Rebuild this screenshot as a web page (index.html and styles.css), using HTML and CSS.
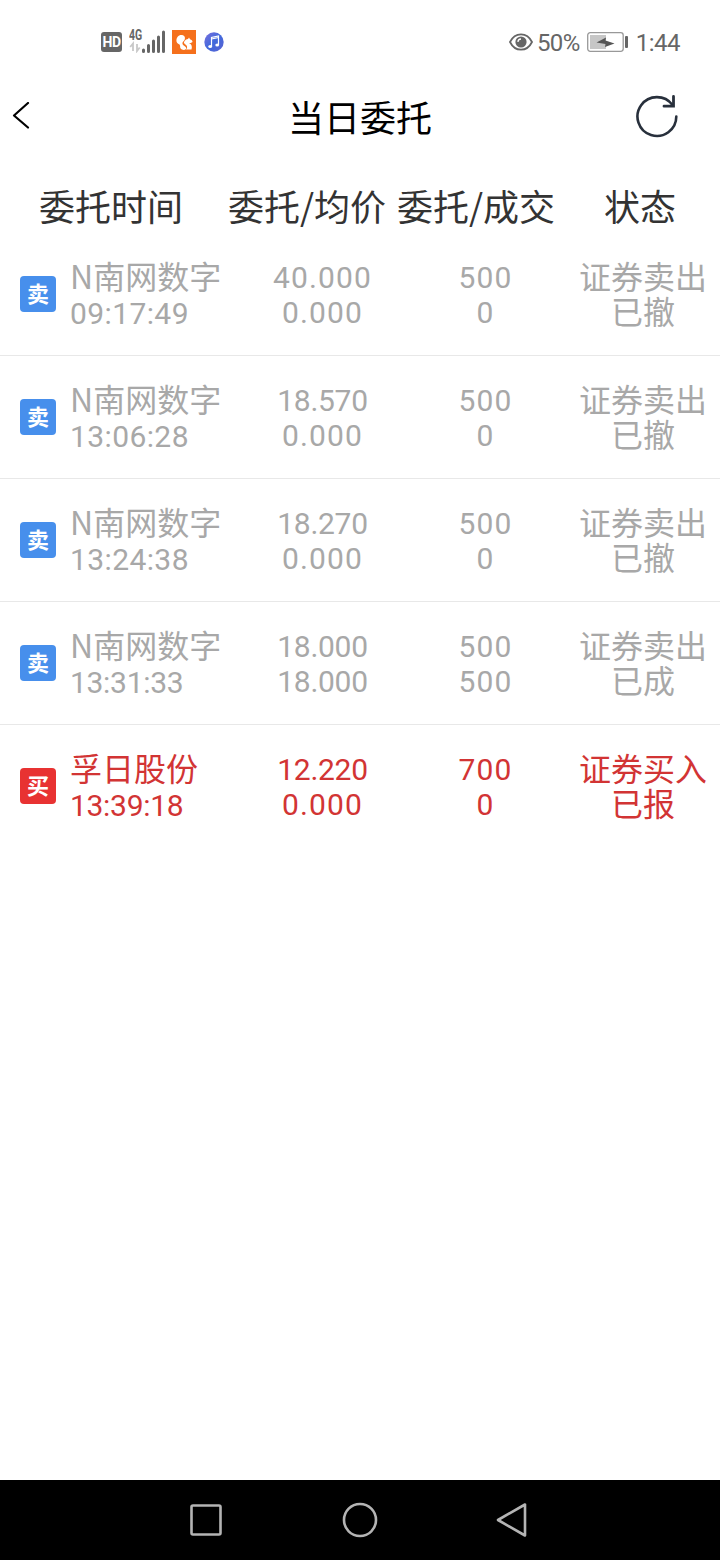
FILE: index.html
```html
<!DOCTYPE html>
<html lang="zh-CN">
<head>
    <meta charset="UTF-8">
    <meta name="viewport" content="width=device-width, initial-scale=1.0">
    <title>当日委托</title>
    <link rel="stylesheet" href="styles.css">
</head>
<body>
    <div class="status-bar">
        <div class="status-left">
            <span class="hd">HD</span>
            <div class="signal">
                <span class="net">4G</span>
                <svg width="37" height="24" viewBox="0 0 37 24">
                    <path d="M4 22v-7.500L1.200 18M8 15v7l2.700-3.500" stroke="#c8c8c8" stroke-width="1.800" fill="none"/>
                    <path d="M14.500 22.500v-1.500M19.500 22.500v-6M24.500 22.500V12M29.500 22.500V8M34.500 22.500V3" stroke="#666" stroke-width="3" stroke-linecap="round"/>
                </svg>
            </div>
            <svg class="squirrel" width="24" height="24" viewBox="0 0 24 24">
                <rect width="24" height="24" fill="#f5701c"/>
                <path d="M4.500 11.500C4 7 7 4.500 10 5c3 .5 3.500 3 2.500 5-.8 1.500-2.500 2-2 4 .5 1.700 2.500 2 3.500 3.500 1 2-2 3-4 2-3-1.500-1-3-2.500-5-1-1-2.500-1-3-3z" fill="#fff"/>
                <path d="M12 12c1-2 2.500-3 4-3l1-1.500 1 1.800c1.500.3 2.500 1.500 2.500 2.700-1 1-2.500 1-3.500 1 2.500 1 3.500 3.500 2.500 6.500h-5.500c2-2 1-4-.5-5-1-.7-1.800-1.500-1.500-2.500z" fill="#fff"/>
            </svg>
            <svg class="music" width="20" height="20" viewBox="0 0 20 20">
                <defs>
                    <linearGradient id="blue" x1="0" y1="0" x2="1" y2="1">
                        <stop offset="0" stop-color="#7a6fdc"/>
                        <stop offset=".5" stop-color="#4169dc"/>
                        <stop offset="1" stop-color="#5b62d2"/>
                    </linearGradient>
                </defs>
                <circle cx="10" cy="10" r="9.700" fill="url(#blue)"/>
                <path d="M7.500 14.500V5.500l7-1.500V13M7.500 7l7-1.500" stroke="#fff" stroke-width="1.200" fill="none"/>
                <ellipse cx="6.200" cy="14.600" rx="1.900" ry="1.500" fill="#fff"/>
                <ellipse cx="13.200" cy="13" rx="1.900" ry="1.500" fill="#fff"/>
            </svg>
        </div>
        <div class="status-right">
            <svg class="eye" width="24" height="18" viewBox="0 0 24 18">
                <path d="M1 9C6-1.200 18-1.200 23 9 18 19.200 6 19.200 1 9z" fill="none" stroke="#666" stroke-width="1.800"/>
                <circle cx="12" cy="9" r="5.600" fill="#666"/>
                <path d="M9 9c0-2 1.500-3 3-3" stroke="#fff" stroke-width="1.300" fill="none"/>
            </svg>
            <span class="percent">50%</span>
            <svg class="battery" width="42" height="20" viewBox="0 0 42 20">
                <rect x=".7" y=".7" width="35.500" height="18.600" rx="2.500" fill="#fff" stroke="#999" stroke-width="1.300"/>
                <rect x="3" y="3" width="16" height="14" fill="#c6c6c6"/>
                <path d="M9.500 10.500L19 5.500l-.5 3L27.500 11.500l-9.500 3.500.5-3z" fill="#555"/>
                <rect x="38" y="4" width="3" height="12" rx="1" fill="#666"/>
            </svg>
            <span class="clock">1:44</span>
        </div>
    </div>

    <header>
        <svg class="back" width="18" height="28" viewBox="0 0 18 28">
            <path d="M16 1L2 13.500l14 12" fill="none" stroke="#000" stroke-width="2.200" stroke-linecap="round" stroke-linejoin="round"/>
        </svg>
        <h1>当日委托</h1>
        <svg class="refresh" width="44" height="44" viewBox="0 0 44 44">
            <path d="M41.300 22.500A19.400 19.400 0 1 1 37.500 11" fill="none" stroke="#28303c" stroke-width="2.600" stroke-linecap="round"/>
            <path d="M38.500 2.500v9.700h-9.500" fill="none" stroke="#28303c" stroke-width="2.800" stroke-linecap="round"/>
        </svg>
    </header>

    <main>
        <div class="table-head">
            <span class="first">委托时间</span>
            <span>委托/均价</span>
            <span>委托/成交</span>
            <span>状态</span>
        </div>

        <div class="order sell">
            <span class="badge">卖</span>
            <div class="name"><span class="mark">N</span>南网数字<br><span class="time">09:17:49</span></div>
            <div class="num">40.000<br>0.000</div>
            <div class="num">500<br>0</div>
            <div class="state">证券卖出<br>已撤</div>
        </div>
        <div class="order sell">
            <span class="badge">卖</span>
            <div class="name"><span class="mark">N</span>南网数字<br><span class="time">13:06:28</span></div>
            <div class="num"><span class="tight">18.570</span><br>0.000</div>
            <div class="num">500<br>0</div>
            <div class="state">证券卖出<br>已撤</div>
        </div>
        <div class="order sell">
            <span class="badge">卖</span>
            <div class="name"><span class="mark">N</span>南网数字<br><span class="time">13:24:38</span></div>
            <div class="num"><span class="tight">18.270</span><br>0.000</div>
            <div class="num">500<br>0</div>
            <div class="state">证券卖出<br>已撤</div>
        </div>
        <div class="order sell">
            <span class="badge">卖</span>
            <div class="name"><span class="mark">N</span>南网数字<br><span class="time tight">13:31:33</span></div>
            <div class="num"><span class="tight">18.000</span><br><span class="tight">18.000</span></div>
            <div class="num">500<br>500</div>
            <div class="state">证券卖出<br>已成</div>
        </div>
        <div class="order buy">
            <span class="badge">买</span>
            <div class="name">孚日股份<br><span class="time tight">13:39:18</span></div>
            <div class="num"><span class="tight">12.220</span><br>0.000</div>
            <div class="num">700<br>0</div>
            <div class="state">证券买入<br>已报</div>
        </div>
    </main>

    <!-- system navigation -->
    <footer>
        <svg width="34" height="34" viewBox="0 0 34 34">
            <rect x="2.500" y="2.500" width="29" height="29" rx="1.500"/>
        </svg>
        <svg width="36" height="36" viewBox="0 0 36 36">
            <circle cx="18" cy="18" r="16"/>
        </svg>
        <svg width="34" height="36" viewBox="0 0 34 36">
            <path d="M3 18L30 2.500v31z"/>
        </svg>
    </footer>
</body>
</html>
```

FILE: styles.css
```css
* {
    box-sizing: border-box;
}

body {
    margin: 0;
    height: 1560px;
    display: flex;
    flex-direction: column;
    background-color: #fff;
    font-family: Roboto, "Noto Sans CJK SC", sans-serif;
    overflow: hidden;
}

svg {
    display: block;
    flex: none;
}

/* Status bar */
.status-bar {
    height: 84px;
    padding: 0 40px 0 101px;
    display: flex;
    justify-content: space-between;
    align-items: center;
    color: #666;
}

.status-left,
.status-right {
    display: flex;
    align-items: center;
}

.hd {
    width: 21px;
    height: 20px;
    border-radius: 3px;
    background-color: #666;
    color: #fff;
    font-size: 14px;
    font-weight: bold;
    letter-spacing: -0.6px;
    line-height: 20px;
    text-align: center;
}

.signal {
    position: relative;
    margin: -3px 6px 0 7px;
}

.net {
    position: absolute;
    left: 0;
    top: -1px;
    font-size: 14px;
    font-weight: bold;
    line-height: 14px;
    transform: scaleX(0.75);
    transform-origin: left;
}

.music {
    margin-left: 8px;
}

.percent {
    margin: 2px 7px 0 4px;
    font-size: 24px;
    letter-spacing: -0.6px;
}

.clock {
    margin: 2px 0 0 7px;
    font-size: 24px;
    letter-spacing: -0.5px;
}

/* Title bar */
header {
    height: 64px;
    padding: 0 41px 0 12px;
    display: grid;
    grid-template-columns: 44px 1fr 44px;
    align-items: center;
}

h1 {
    margin: 0;
    padding: 0 0 1px 29px;
    font-family: "Noto Sans CJK SC", sans-serif;
    font-size: 36px;
    font-weight: normal;
    line-height: 52px;
    text-align: center;
    color: #000;
}

/* Order list */
main {
    flex: 1;
}

.table-head {
    height: 85px;
    padding-top: 31px;
    display: grid;
    grid-template-columns: 222px 170px 168px 160px;
    font-family: "Noto Sans CJK SC", sans-serif;
    font-size: 36px;
    line-height: 52px;
    text-align: center;
    color: #333;
}

.table-head .first {
    padding-left: 39px;
    text-align: left;
}

.order {
    height: 123px;
    padding-left: 20px;
    display: grid;
    grid-template-columns: 50px 170px 164px 162px 154px;
    align-items: center;
    border-bottom: 1px solid #e8e8e8;
    font-size: 32px;
    line-height: 35px;
    color: #a8a8a8;
}

.order:last-child {
    border-bottom-color: transparent;
}

.buy {
    color: #d23434;
}

.badge {
    width: 36px;
    height: 36px;
    padding-top: 1px;
    border-radius: 4px;
    background-color: #478fec;
    color: #fff;
    font-size: 22px;
    font-weight: bold;
    line-height: 36px;
    text-align: center;
}

.buy .badge {
    background-color: #e83232;
}

.name {
    padding-top: 3px;
    white-space: nowrap;
}

.mark {
    font-family: "Noto Sans CJK SC", sans-serif;
    line-height: 0;
}

.num,
.state {
    text-align: center;
}

.num {
    padding: 2px 0 0 1px;
    font-size: 30px;
    letter-spacing: 1.1px;
}

.state {
    padding-top: 4px;
}

.time {
    font-size: 30px;
    letter-spacing: 0.4px;
}

.tight {
    letter-spacing: -0.3px;
}

/* Bottom navigation */
footer {
    height: 80px;
    padding: 0 191px 0 189px;
    display: flex;
    justify-content: space-between;
    align-items: center;
    background-color: #000;
}

footer svg {
    fill: none;
    stroke: #b4b4b4;
    stroke-width: 2.6;
    stroke-linejoin: round;
}

footer svg:nth-child(2) {
    margin-left: 2px;
}
```
